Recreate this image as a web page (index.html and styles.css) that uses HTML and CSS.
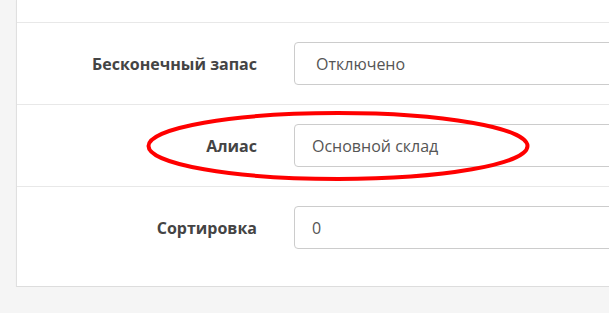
FILE: index.html
```html
<!DOCTYPE html>
<html lang="ru">
<head>
    <meta charset="UTF-8">
    <meta name="viewport" content="width=device-width, initial-scale=1.0">
    <title>Склад</title>
    <link rel="stylesheet" href="styles.css">
</head>
<body>
    <div class="panel">
        <div class="panel-cut"></div>
        <div class="form-row">
            <label class="form-label" for="unlimited">Бесконечный запас</label>
            <select class="form-control form-select" id="unlimited">
                <option>Отключено</option>
                <option>Включено</option>
            </select>
        </div>
        <div class="form-row">
            <label class="form-label" for="alias">Алиас</label>
            <input class="form-control" type="text" id="alias" value="Основной склад">
            <svg class="mark" width="400" height="80" viewBox="0 0 400 80">
                <ellipse cx="200" cy="40" rx="189.5" ry="33" fill="none" stroke="#f00" stroke-width="4"/>
            </svg>
        </div>
        <div class="form-row">
            <label class="form-label" for="sort">Сортировка</label>
            <input class="form-control" type="text" id="sort" value="0">
        </div>
    </div>
</body>
</html>
```

FILE: styles.css
```css
body {
    margin: 0;
    background-color: #f5f5f5;
    font-family: "Open Sans", Arial, sans-serif;
    overflow: hidden;
}

.panel {
    width: 800px;
    margin-left: 16px;
    padding-bottom: 18px;
    background-color: white;
    border-left: 1px solid #e0e0e0;
    border-bottom: 1px solid #ddd;
    box-shadow: 0 1px 1px rgba(0, 0, 0, 0.05);
}

.panel-cut {
    height: 22px;
}

.form-row {
    position: relative;
    display: flex;
    align-items: center;
    gap: 37px;
    padding: 19px 0;
    border-top: 1px solid #e8e8e8;
}

.form-label {
    width: 240px;
    text-align: right;
    font-size: 16px;
    font-weight: 700;
    color: #444;
}

.form-control {
    flex: 1;
    box-sizing: border-box;
    height: 43px;
    padding: 0 17px;
    font-family: inherit;
    font-size: 16px;
    color: #555;
    background-color: white;
    border: 1px solid #ccc;
    border-radius: 4px;
    outline: none;
}

.form-select {
    padding-left: 21px;
    appearance: none;
}

.mark {
    position: absolute;
    left: 121px;
    top: 1px;
}
```
